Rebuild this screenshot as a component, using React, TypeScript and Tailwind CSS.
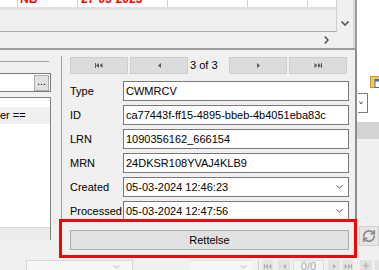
import React from "react";
import { RefreshCw } from "lucide-react";

const First = ({ c = "#5a5a5a" }: { c?: string }) => (
  <svg width="8" height="5" viewBox="0 0 8 5">
    <rect x="0" y="0" width="1" height="5" fill={c} />
    <polygon points="4,0 1,2.5 4,5" fill={c} />
    <polygon points="7.5,0 4.5,2.5 7.5,5" fill={c} />
  </svg>
);
const Prev = ({ c = "#5a5a5a" }: { c?: string }) => (
  <svg width="3" height="5" viewBox="0 0 3 5">
    <polygon points="3,0 0,2.5 3,5" fill={c} />
  </svg>
);
const Next = ({ c = "#5a5a5a" }: { c?: string }) => (
  <svg width="3" height="5" viewBox="0 0 3 5">
    <polygon points="0,0 3,2.5 0,5" fill={c} />
  </svg>
);
const Last = ({ c = "#5a5a5a" }: { c?: string }) => (
  <svg width="8" height="5" viewBox="0 0 8 5">
    <polygon points="0.5,0 3.5,2.5 0.5,5" fill={c} />
    <polygon points="4,0 7,2.5 4,5" fill={c} />
    <rect x="7" y="0" width="1" height="5" fill={c} />
  </svg>
);

const ChevDown = ({ c = "#404040", sw = 1, w = 8, h = 5 }: { c?: string; sw?: number; w?: number; h?: number }) => (
  <svg width={w} height={h} viewBox={`0 0 ${w} ${h}`}>
    <polyline points={`0.5,0.5 ${w / 2},${h - 1} ${w - 0.5},0.5`} fill="none" stroke={c} strokeWidth={sw} />
  </svg>
);
const ChevRight = ({ c = "#5a5a5a" }: { c?: string }) => (
  <svg width="5" height="8" viewBox="0 0 5 8">
    <polyline points="0.8,0.5 4,4 0.8,7.5" fill="none" stroke={c} strokeWidth="1.6" />
  </svg>
);

const NavBtn = ({ children, className = "" }: { children: React.ReactNode; className?: string }) => (
  <div className={`flex w-[58px] shrink-0 items-center justify-center border border-[#cdcdcd] bg-[#dcdcdc] ${className}`}>{children}</div>
);

const Field = ({ label, value, dropdown }: { label: string; value: string; dropdown?: boolean }) => (
  <div className="flex h-[20px] items-center">
    <div className="w-[53px] shrink-0 whitespace-nowrap leading-[13px]">{label}</div>
    <div className="flex h-[20px] w-[226px] shrink-0 items-center justify-between border border-[#7a7a7a] bg-white pl-[2px] pr-[5px]">
      <span className="whitespace-nowrap leading-[13px]">{value}</span>
      {dropdown && <ChevDown c="#505050" w={7} h={4} />}
    </div>
  </div>
);

export default function App() {
  return (
    <div className="relative flex h-[270px] w-[379px] flex-col overflow-hidden bg-[#f0f0f0] font-['Liberation_Sans',Arial,sans-serif] text-[11px] text-black">
      {/* top window */}
      <div className="flex h-[50px] shrink-0">
        <div className="flex w-[357px] shrink-0 flex-col border-b-2 border-r-2 border-[#9c9c9c]">
          <div className="flex flex-1 border-r-2 border-[#d9d9d9]">
            <div className="flex w-[337px] shrink-0 flex-col">
              <div className="flex h-[32px] flex-col border-b border-r border-b-[#ababab] border-r-[#cfcfcf] bg-[#efefef]">
                <div className="flex h-[7px] overflow-hidden bg-white text-[12px] font-bold leading-[12px] text-[#ff0000]">
                  <div className="w-[17px] shrink-0" />
                  <div className="w-[60px] shrink-0 border-l border-[#d4d4d4] pl-[2px]">
                    <div className="-mt-[7px]">NB</div>
                  </div>
                  <div className="w-[90px] shrink-0 border-l border-[#d4d4d4] pl-[3px]">
                    <div className="-mt-[7px]">27-05-2023</div>
                  </div>
                  <div className="w-[80px] shrink-0 border-l border-[#d4d4d4]" />
                  <div className="w-[60px] shrink-0 border-l border-[#d4d4d4]" />
                  <div className="flex-1 border-l border-[#d4d4d4]" />
                </div>
                <div className="h-[3px] bg-[#e0e0e0]" />
              </div>
              <div className="flex flex-1 items-center justify-end pr-[8px]">
                <ChevRight c="#555555" />
              </div>
            </div>
            <div className="flex flex-1 justify-center pt-[21px]">
              <ChevDown c="#555555" sw={1.6} w={8} h={5} />
            </div>
          </div>
        </div>
        <div className="flex-1 bg-white" />
      </div>

      {/* middle */}
      <div className="flex h-[208px] shrink-0">
        {/* left panel */}
        <div className="flex w-[61px] shrink-0 flex-col">
          <div className="mt-[11px] h-px w-[49px] bg-[#a0a0a0]" />
          <div className="mt-[11px] flex h-[19px] w-[51px] items-start justify-end border-y border-r border-[#7a7a7a] bg-white pr-px pt-px">
            <div className="flex h-[16px] w-[15px] items-center justify-center border border-[#adadad] bg-[#e1e1e1] pb-[3px] text-[11px] leading-none">
              ...
            </div>
          </div>
          <div className="mt-[5px] flex w-[51px] flex-1 flex-col border-r border-t border-[#828282] bg-white">
            <div className="mt-[9px] flex h-[17px] items-center overflow-hidden whitespace-nowrap bg-[#efefef] leading-[13px]">er ==</div>
            <div className="flex-1" />
            <div className="h-[13px] border-t border-[#d8d8d8] bg-[#ececec]" />
          </div>
          <div className="h-[18px]" />
        </div>

        {/* dialog */}
        <div className="flex w-[296px] shrink-0 flex-col border-r-2 border-[#8c8c8c]">
          <div className="mt-[6px] flex flex-1 flex-col border-l border-[#a0a0a0] pl-[8px] pr-[6px] pt-px">
            <div className="flex h-[17px]">
              <NavBtn>
                <First />
              </NavBtn>
              <NavBtn className="ml-[2px]">
                <Prev />
              </NavBtn>
              <div className="flex w-[41px] shrink-0 items-center whitespace-nowrap pl-[2px] leading-[13px]">3 of 3</div>
              <NavBtn>
                <Next />
              </NavBtn>
              <NavBtn className="ml-[2px]">
                <Last />
              </NavBtn>
            </div>
            <div className="mt-[7px] flex flex-col gap-[4px]">
              <Field label="Type" value="CWMRCV" />
              <Field label="ID" value="ca77443f-ff15-4895-bbeb-4b4051eba83c" />
              <Field label="LRN" value="1090356162_666154" />
              <Field label="MRN" value="24DKSR108YVAJ4KLB9" />
              <Field label="Created" value="05-03-2024 12:46:23" dropdown />
              <Field label="Processed" value="05-03-2024 12:47:56" dropdown />
            </div>
            <button className="mt-[9px] flex h-[20px] w-[279px] items-center justify-center border border-[#adadad] bg-[#e1e1e1] leading-[13px]">
              Rettelse
            </button>
          </div>
        </div>

        {/* right panel */}
        <div className="flex min-w-0 flex-1 flex-col overflow-hidden">
          <div className="flex h-[72px] flex-col bg-white">
            <div className="ml-[13px] mt-[25px] h-[13px] w-[9px] overflow-hidden">
              <svg width="12" height="13" viewBox="0 0 12 13">
                <rect x="0.5" y="1.5" width="10" height="11" fill="#f4c75c" stroke="#c8962c" />
                <rect x="5" y="4.5" width="7" height="8" fill="#ffffff" stroke="#3b6fc4" />
                <rect x="5" y="4.5" width="7" height="2" fill="#3b6fc4" />
              </svg>
            </div>
            <div className="ml-[1px] mt-[5px] flex h-[20px] w-[10px] items-center border-y border-r border-[#7a7a7a] bg-white pl-[1px]">
              <ChevDown c="#606060" w={4} h={4} />
            </div>
          </div>
          <div className="h-[17px] bg-[#d4d4d4]" />
          <div className="ml-[2px] mt-[87px] flex h-[20px] w-[20px] items-center justify-center border border-[#d0d0d0] bg-[#e6e6e6]">
            <RefreshCw size={14} color="#8a8a8a" strokeWidth={3} />
          </div>
        </div>
      </div>

      {/* bottom bar */}
      <div className="flex h-[12px] shrink-0 items-start overflow-hidden pt-[2px]">
        <div className="w-[26px] shrink-0" />
        <div className="flex h-[14px] w-[107px] shrink-0 items-center justify-end border border-[#d6d6d6] bg-[#f6f6f6] pr-[12px]">
          <ChevDown c="#b8b8b8" w={7} h={4} />
        </div>
        <div className="w-[57px] shrink-0" />
        <div className="flex h-[14px] w-[62px] shrink-0 items-center justify-end border-y border-[#dedede] bg-[#f6f6f6] pr-[5px]">
          <ChevDown c="#b8b8b8" w={7} h={4} />
        </div>
        <div className="ml-[6px] h-[12px] w-px shrink-0 bg-[#cfcfcf]" />
        <div className="ml-[3px] flex h-[12px] w-[11px] shrink-0 items-center justify-center bg-[#e2e2e2]">
          <First c="#b0b0b0" />
        </div>
        <div className="ml-[5px] flex h-[12px] w-[12px] shrink-0 items-center justify-center bg-[#e2e2e2]">
          <Prev c="#b0b0b0" />
        </div>
        <div className="ml-[3px] flex h-[12px] w-[31px] shrink-0 items-center justify-center border border-[#dadada] bg-[#f4f4f4] leading-[11px] text-[#a8a8a8]">
          0/0
        </div>
        <div className="ml-[4px] flex h-[12px] w-[12px] shrink-0 items-center justify-center bg-[#e2e2e2]">
          <Next c="#b0b0b0" />
        </div>
        <div className="ml-[2px] flex h-[12px] w-[11px] shrink-0 items-center justify-center bg-[#e2e2e2]">
          <Last c="#b0b0b0" />
        </div>
        <div className="ml-[7px] flex h-[12px] w-[12px] shrink-0 items-center justify-center bg-[#e2e2e2] text-[12px] font-bold leading-none text-[#b4b4b4]">
          +
        </div>
        <div className="ml-[3px] h-[12px] w-[12px] shrink-0 bg-[#e2e2e2]" />
      </div>

      {/* red highlight */}
      <div className="pointer-events-none absolute left-[59px] top-[219px] h-[39px] w-[298px] border-[3px] border-[#ff0000]" />
    </div>
  );
}
